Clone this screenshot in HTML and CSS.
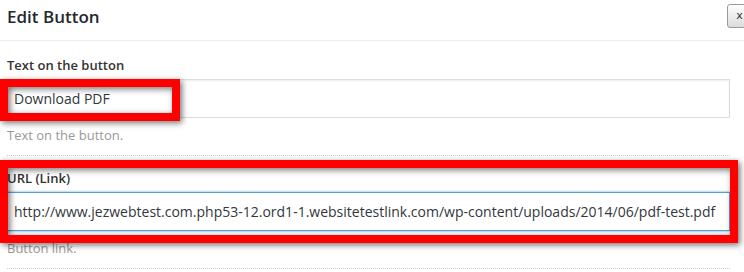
FILE: index.html
```html
<!DOCTYPE html>
<html>
	<head>
		<meta charset="utf-8">
		<title>Edit Button</title>
	<link rel="stylesheet" href="styles.css">
	</head>
	<body>
	<div class="head">
		<h1 class="title">Edit Button</h1>
		<button class="close">x</button>
	</div>
	<div class="form">
		<div class="field">
			<label class="label">Text on the button</label>
			<input type="text" class="text" value="Download PDF"/>
			<p class="desc">Text on the button.</p>
		</div>
		<div class="field">
			<label class="label">URL (Link)</label>
			<input type="text" class="text focus" value="http://www.jezwebtest.com.php53-12.ord1-1.websitetestlink.com/wp-content/uploads/2014/06/pdf-test.pdf"/>
			<p class="desc">Button link.</p>
		</div>
	</div>
	<!-- red marks drawn over the screenshot -->
	<div class="mark markOne"></div>
	<div class="mark markTwo"></div>
	</body>
</html>
```
FILE: styles.css
```css
body{
	margin: 0;
	background: #fff;
	font-family: "Open Sans", "Liberation Sans", sans-serif;
	color: #333;
	overflow: hidden;
}
.head{
	height: 40px;
	border-bottom: 1px solid #ececec;
	display: flex;
	justify-content: space-between;
	align-items: flex-start;
	padding-left: 7px;
}
.title{
	margin: 0;
	font-size: 17px;
	font-weight: 600;
	line-height: 33px;
	color: #23282d;
}
.close{
	margin-top: 4px;
	margin-right: -8px;
	width: 25px;
	height: 24px;
	padding: 0;
	border: 1px solid #9a9a9a;
	border-radius: 3px;
	background: linear-gradient(#fefefe, #dcdcdc);
	font-family: "DejaVu Sans", sans-serif;
	font-size: 11px;
	color: #333;
	text-align: center;
	line-height: 20px;
}
.form{
	padding: 2px 14px 0 7px;
}
.field{
	padding: 13px 0 11px 0;
	border-bottom: 1px dotted #ccc;
}
.label{
	display: block;
	font-size: 13px;
	font-weight: 600;
	line-height: 18px;
	color: #333;
}
.text{
	display: block;
	box-sizing: border-box;
	width: 100%;
	height: 39px;
	margin-top: 5px;
	padding: 0 6px;
	border: 1px solid #ddd;
	box-shadow: inset 0 1px 2px rgba(0,0,0,.07);
	font-family: "Open Sans", "Liberation Sans", sans-serif;
	font-size: 14px;
	color: #32373c;
	outline: none;
}
.focus{
	border-color: #5b9dd9;
	box-shadow: 0 0 2px rgba(30,140,190,.8);
}
.desc{
	margin: 8px 0 0 0;
	font-size: 13px;
	line-height: 18px;
	color: #999;
}

.mark{
	position: absolute;
	box-sizing: border-box;
	border: 8px solid #ff0000;
	box-shadow: 2px 2px 6px rgba(0,0,0,.55), inset 2px 2px 6px rgba(0,0,0,.55);
}
.markOne{
	left: 0;
	top: 79px;
	width: 180px;
	height: 42px;
}
.markTwo{
	left: 0;
	top: 160px;
	width: 738px;
	height: 83px;
}
```
